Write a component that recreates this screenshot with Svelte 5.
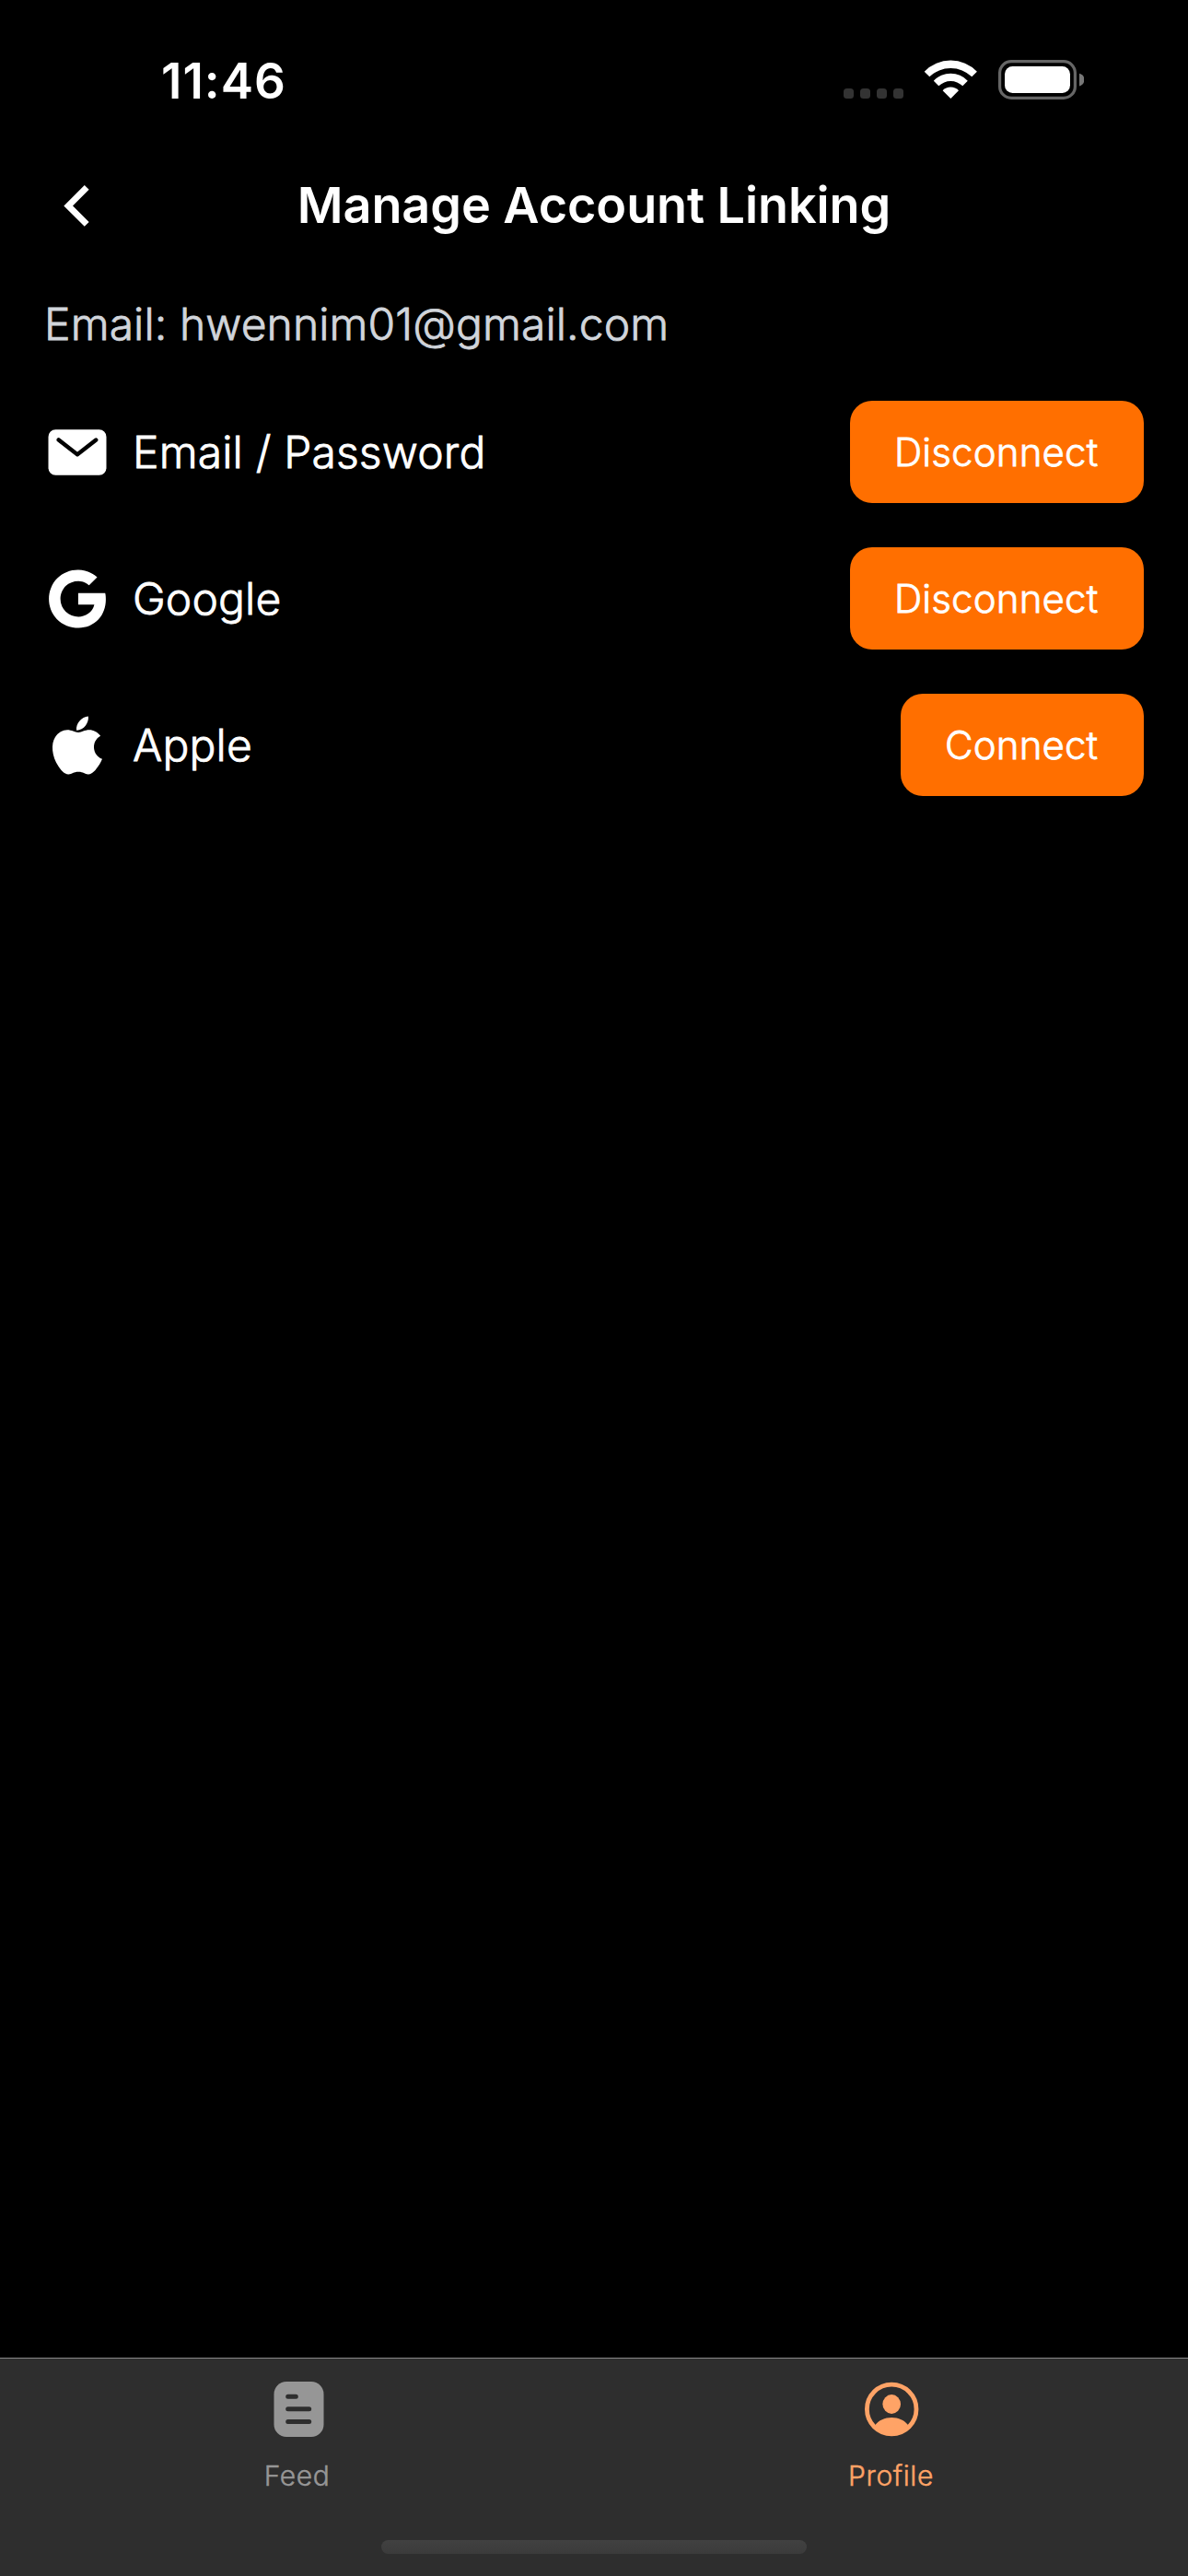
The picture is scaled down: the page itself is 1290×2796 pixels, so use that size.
<script>
  const providers = [
    { id: 'mail', name: 'Email / Password', action: 'Disconnect' },
    { id: 'google', name: 'Google', action: 'Disconnect' },
    { id: 'apple', name: 'Apple', action: 'Connect' }
  ];

  const glyphs = {
    mail: [
      'M424 80H88a56.06 56.06 0 00-56 56v240a56.06 56.06 0 0056 56h336a56.06 56.06 0 0056-56V136a56.06 56.06 0 00-56-56zm-14.18 92.63l-144 112a16 16 0 01-19.64 0l-144-112a16 16 0 1119.64-25.26L256 251.73l134.18-104.36a16 16 0 0119.64 25.26z'
    ],
    google: [
      'M473.16 221.48l-2.26-9.59H262.46v88.22H387c-12.93 61.4-72.93 93.72-121.94 93.72-35.66 0-73.25-15-98.13-39.11a140.08 140.08 0 01-41.8-98.88c0-37.16 16.7-74.33 41-98.78s61-38.13 97.49-38.13c41.79 0 71.74 22.19 82.94 32.31l62.69-62.36C390.86 72.72 340.34 32 261.6 32c-60.75 0-119 23.27-161.58 65.71C58 139.5 36.25 199.93 36.25 256s20.58 113.48 61.3 155.6c43.51 44.92 105.13 68.4 168.58 68.4 57.73 0 112.45-22.62 151.45-63.66 38.34-40.4 58.17-96.3 58.17-154.9 0-24.67-2.48-39.32-2.59-39.96z'
    ],
    apple: [
      'M349.13 136.86c-40.32 0-57.36 19.24-85.44 19.24-28.79 0-50.75-19.1-85.69-19.1-34.2 0-70.67 20.88-93.83 56.45-32.52 50.16-27 144.63 25.67 225.11 18.84 28.81 44 61.12 77 61.47h.6c28.68 0 37.2-18.78 76.67-19h.6c38.88 0 46.68 18.89 75.24 18.89h.6c33-.35 59.51-36.15 78.35-64.85 13.56-20.64 18.6-31 29-54.35-76.19-28.92-88.43-136.93-13.08-178.34-23-28.8-55.32-45.48-85.79-45.48z',
      'M340.25 32c-24 1.63-52 16.91-68.4 36.86-14.88 18.08-27.12 44.9-22.32 70.91h1.92c25.56 0 51.72-15.39 67-35.11 14.72-18.77 25.88-45.37 21.8-72.66z'
    ]
  };
</script>

<div class="screen">
  <div class="status">
    <span class="time">11:46</span>
    <div class="indicators">
      <svg width="66" height="45" viewBox="0 0 66 45" fill="#333">
        <rect x="0" y="31" width="11" height="11" rx="3.5" />
        <rect x="18" y="31" width="11" height="11" rx="3.5" />
        <rect x="36" y="31" width="11" height="11" rx="3.5" />
        <rect x="54" y="31" width="11" height="11" rx="3.5" />
      </svg>
      <svg width="59" height="45" viewBox="0 0 59 45" fill="#fff">
        <path d="M.7 12.7A39.8 39.8 0 0 1 57.9 12.7L52.3 18.3A33 33 0 0 0 6.3 18.3Z" />
        <path d="M10.8 22.7A25.4 25.4 0 0 1 47.8 22.7L42.3 28.3A18.6 18.6 0 0 0 16.3 28.3Z" />
        <path d="M20.6 33.3A12 12 0 0 1 38 33.3L29.3 42Z" />
      </svg>
      <svg width="94" height="45" viewBox="0 0 94 45">
        <rect x="2.6" y="1.6" width="81.8" height="39.8" rx="12.5" fill="none" stroke="#666" stroke-width="3.2" />
        <rect x="8" y="7" width="71" height="29" rx="8.5" fill="#fff" />
        <path d="M89 14.8a7 7 0 0 1 0 13.6z" fill="#777" />
      </svg>
    </div>
  </div>

  <header>
    <svg class="back" width="72" height="72" viewBox="0 0 72 72" fill="none" stroke="#fff" stroke-width="6.9">
      <path d="M46.2 16.4 26.2 36.4 46.2 56.4" />
    </svg>
    <h1>Manage Account Linking</h1>
  </header>

  <main>
    <p class="email">Email: hwennim01@gmail.com</p>
    <ul>
      {#each providers as p (p.id)}
        <li>
          <svg width="72" height="72" viewBox="0 0 512 512" fill="#fff">
            {#each glyphs[p.id] as d}<path {d} />{/each}
          </svg>
          <span class="name">{p.name}</span>
          <button type="button">{p.action}</button>
        </li>
      {/each}
    </ul>
  </main>

  <nav>
    <div class="tabs">
      <a class="tab feed" href="#feed">
        <svg width="66" height="66" viewBox="0 0 66 66">
          <rect x="7.5" y="3" width="54" height="60" rx="13.5" fill="#969696" />
          <g stroke="#2e2e2e" stroke-width="5" stroke-linecap="round">
            <path d="M22.7 19.3h8.6M22.7 32.8h23M22.7 46.5h23" />
          </g>
        </svg>
        <span>Feed</span>
      </a>
      <a class="tab profile" href="#profile">
        <svg width="66" height="66" viewBox="0 0 66 66" fill="#ffa366">
          <circle cx="33.2" cy="33" r="26.8" fill="none" stroke="#ffa366" stroke-width="4.8" />
          <ellipse cx="33.2" cy="27.5" rx="9.8" ry="10.4" />
          <path d="M15.2 50.3C19.2 45 25.7 42 33.2 42s14 3 18 8.3C46.7 56 40.2 60 33.2 60s-13.5-4-18-9.7z" />
        </svg>
        <span>Profile</span>
      </a>
    </div>
    <div class="home"></div>
  </nav>
</div>

<style>
  :global(body) {
    margin: 0;
    background: #000;
  }
  .screen {
    width: 1290px;
    height: 2796px;
    display: flex;
    flex-direction: column;
    background: #000;
    color: #fff;
    font-family: Inter, sans-serif;
    overflow: hidden;
  }
  svg {
    display: block;
    flex: none;
  }
  .status {
    height: 175px;
    box-sizing: border-box;
    padding: 0 113px 0 175px;
    display: flex;
    align-items: center;
    justify-content: space-between;
  }
  .time {
    font-size: 53px;
    font-weight: 600;
    line-height: 64px;
    letter-spacing: 1px;
  }
  .indicators {
    display: flex;
    gap: 21px;
  }
  header {
    height: 95px;
    padding: 0 48px;
    display: grid;
    grid-template-columns: 72px 1fr 72px;
    align-items: center;
  }
  h1 {
    margin: 0;
    font-size: 54px;
    font-weight: 600;
    line-height: 65px;
    letter-spacing: -0.1px;
    text-align: center;
  }
  main {
    flex: 1;
    padding: 45px 48px 0;
  }
  .email,
  .name,
  button {
    font-weight: 300;
    -webkit-text-stroke: 0.8px currentColor;
  }
  .email {
    margin: 0 0 47px;
    font-size: 48px;
    line-height: 73px;
    letter-spacing: 0.1px;
    color: #d1d5db;
  }
  ul {
    list-style: none;
    margin: 0;
    padding: 0;
    display: flex;
    flex-direction: column;
    gap: 48px;
  }
  li {
    height: 111px;
    display: flex;
    align-items: center;
    gap: 24px;
  }
  .name {
    flex: 1;
    font-size: 48px;
    line-height: 73px;
    letter-spacing: 0.15px;
  }
  button {
    height: 111px;
    border: 0;
    border-radius: 24px;
    padding: 0 49.7px 0 48px;
    background: #ff6f00;
    color: #fff;
    font-family: inherit;
    font-size: 42px;
    line-height: 63px;
    letter-spacing: 0.15px;
  }
  nav {
    height: 237px;
    box-sizing: border-box;
    border-top: 1px solid #8a8a8a;
    background: #2e2e2e;
    display: flex;
    flex-direction: column;
    align-items: center;
    justify-content: space-between;
    padding: 22px 0 24px;
  }
  .tabs {
    width: 100%;
    display: grid;
    grid-template-columns: 1fr 1fr;
  }
  .tab {
    display: flex;
    flex-direction: column;
    align-items: center;
    gap: 21px;
    font-size: 30px;
    font-weight: 300;
    line-height: 37px;
    letter-spacing: 0.6px;
    text-decoration: none;
    -webkit-text-stroke: 0.5px currentColor;
  }
  .feed {
    color: #969696;
  }
  .profile {
    color: #ffa366;
  }
  .home {
    width: 462px;
    height: 15px;
    border-radius: 8px;
    background: linear-gradient(#414141, #3b3b3b);
  }
</style>
